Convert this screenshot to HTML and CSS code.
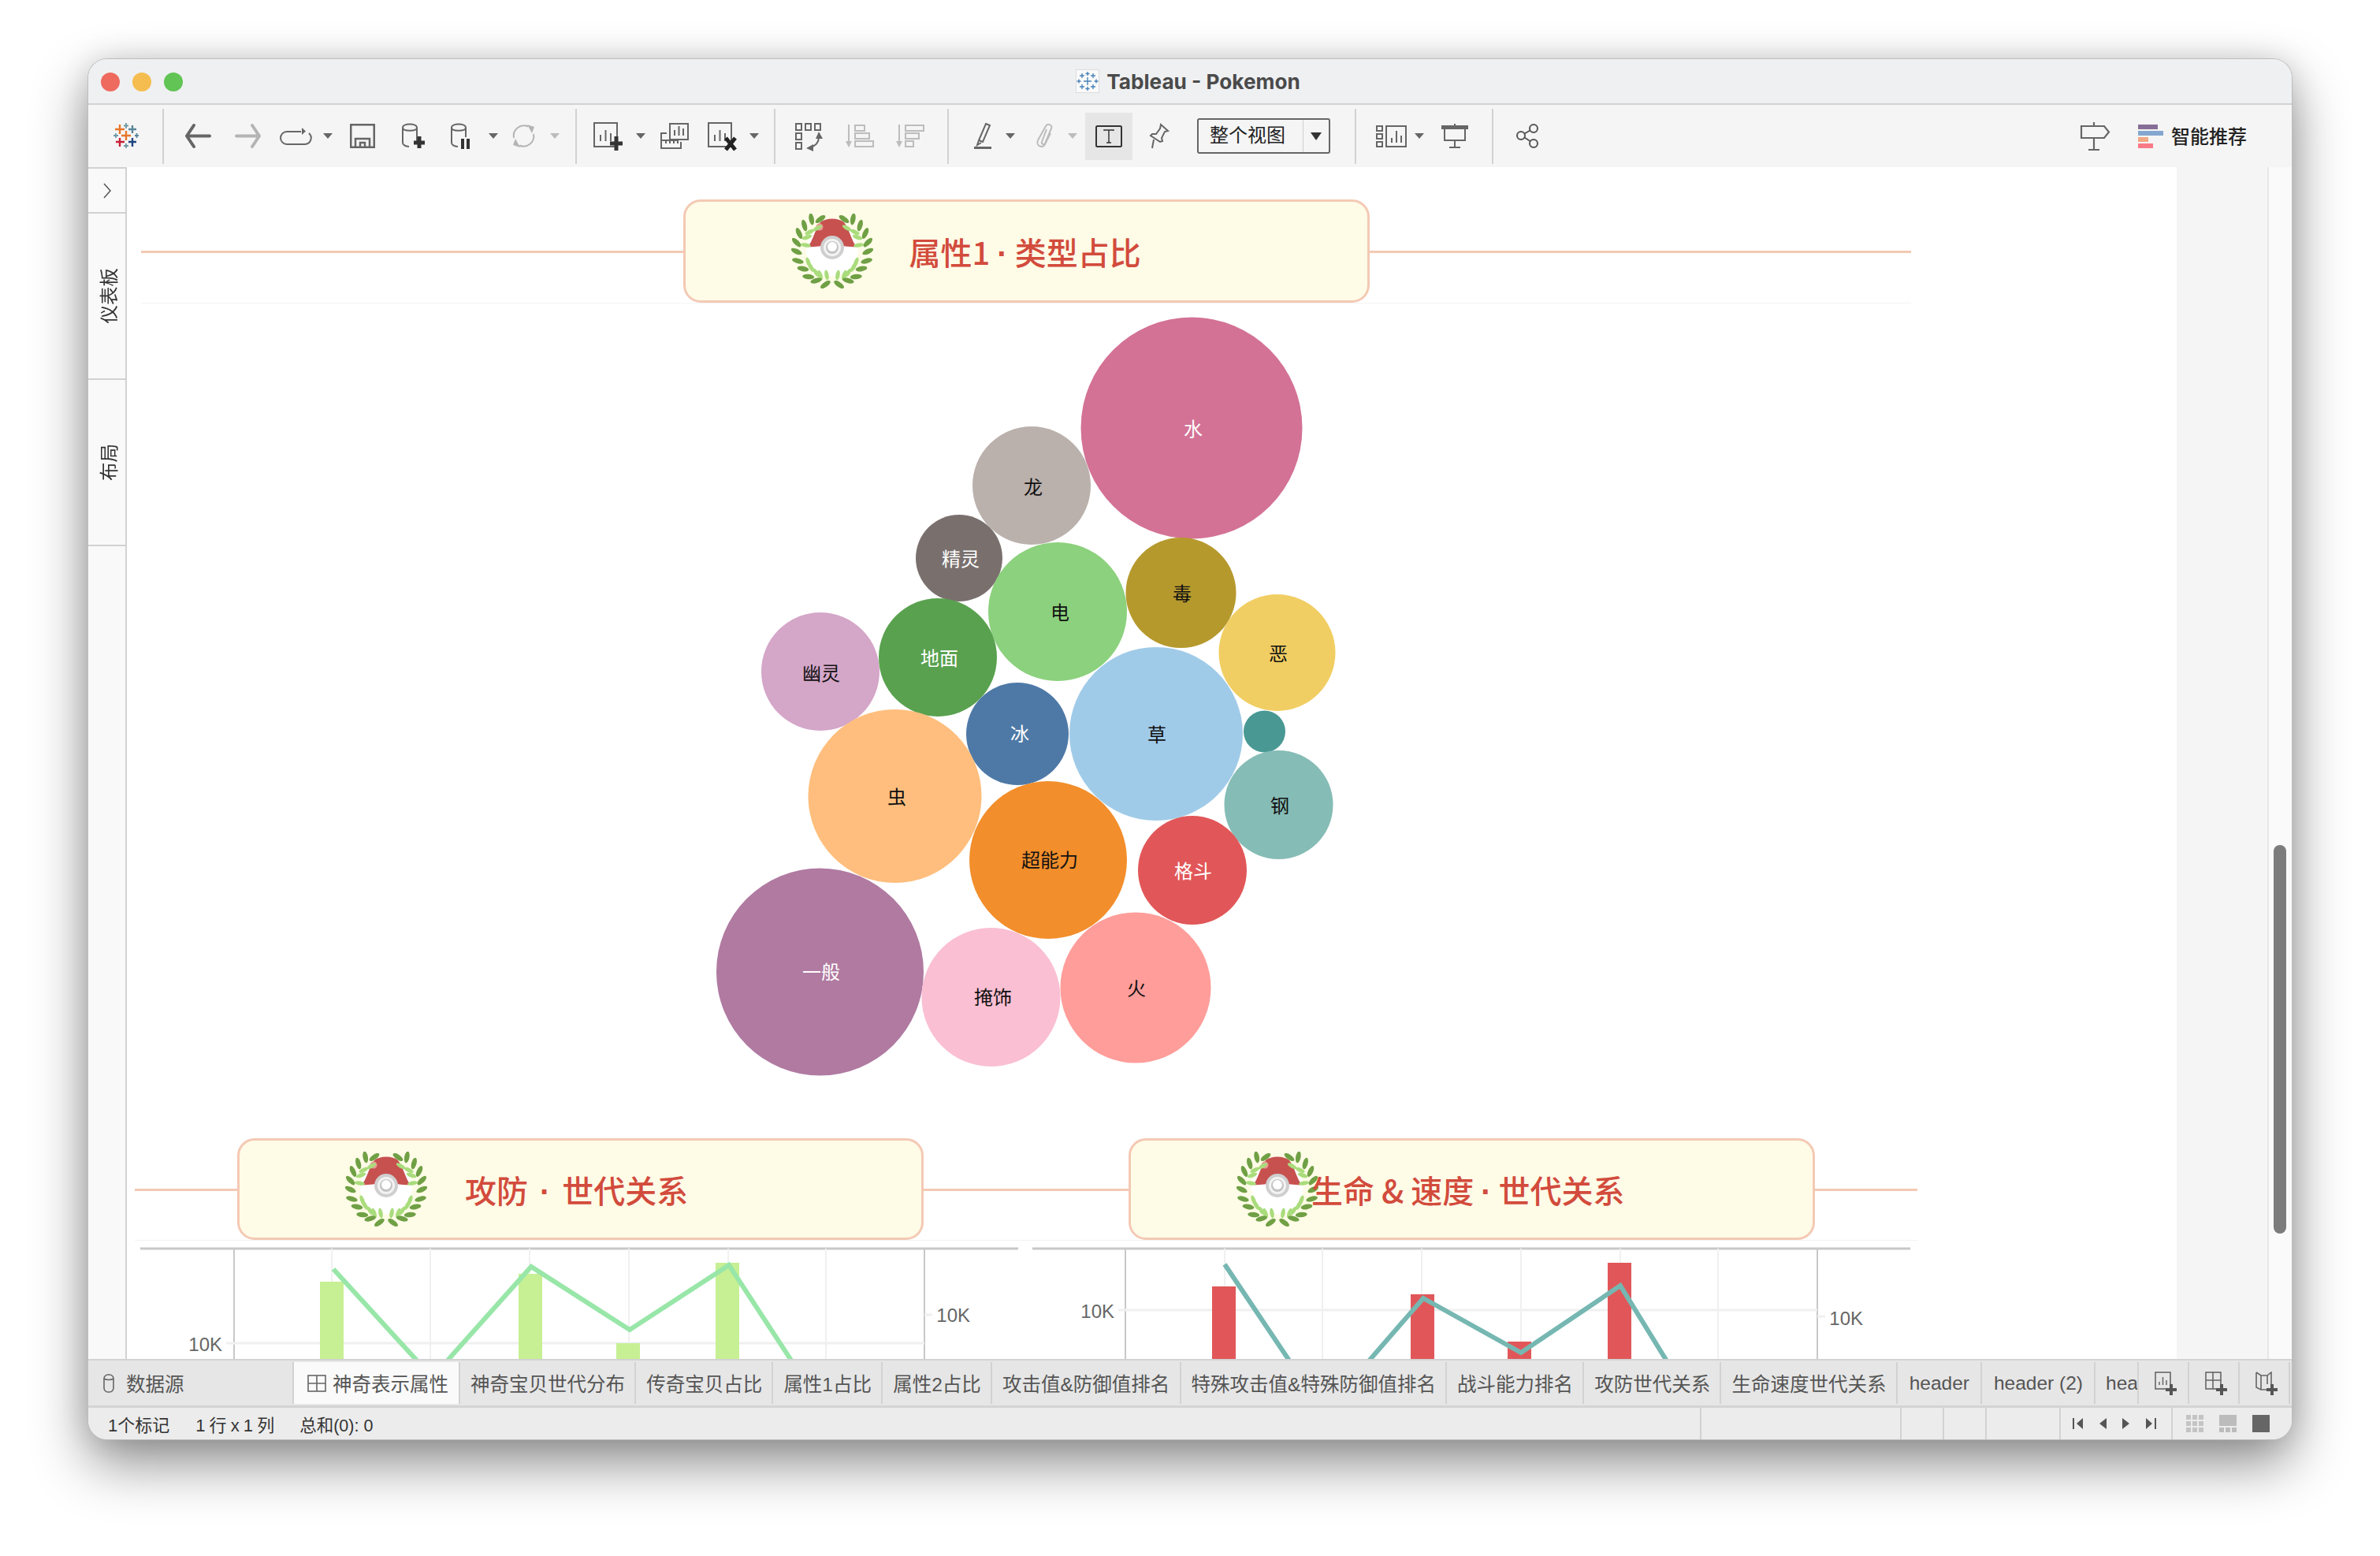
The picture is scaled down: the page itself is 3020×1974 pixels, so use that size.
FILE: index.html
```html
<!DOCTYPE html>
<html lang="zh">
<head>
<meta charset="utf-8">
<title>Tableau - Pokemon</title>
<link rel="stylesheet" href="styles.css">
</head>
<body>
<svg class="defs" width="0" height="0" aria-hidden="true">
  <defs>
    <filter id="soft" x="-5%" y="-5%" width="110%" height="110%"><feGaussianBlur stdDeviation="0.6"/></filter>
    <g id="leafOuter"><ellipse cx="0" cy="0" rx="7.500" ry="3.200" fill="#6fa044"/></g>
    <g id="leafInner"><ellipse cx="0" cy="0" rx="6.500" ry="2.600" fill="#a9dc7c"/></g>
    <symbol id="wreath" viewBox="0 0 104 96">
      <g filter="url(#soft)">
        <circle cx="52" cy="46" r="33" fill="#fff"/>
        <path d="M21 42 C27 36 30 20 37 11 C44 5 60 5 67 11 C74 20 77 36 83 42 C72 43 64 40 52 40 C40 40 32 43 21 42 Z" fill="#c65150"/>
        <circle cx="36" cy="17" r="4.500" fill="#e79a94"/>
        <circle cx="52" cy="43" r="15" fill="#cfcfcf"/>
        <circle cx="52" cy="43" r="11" fill="#f3f3f3"/>
        <circle cx="52" cy="43" r="8" fill="#c4c4c4"/>
        <circle cx="52" cy="42" r="6" fill="#fff"/>
        <g>
          <use href="#leafInner" transform="translate(33.400 18.300) rotate(-30)"/>
          <use href="#leafInner" transform="translate(23.400 23.300) rotate(-25)"/>
          <use href="#leafInner" transform="translate(20 30) rotate(-20)"/>
          <use href="#leafInner" transform="translate(18.400 40) rotate(10)"/>
          <use href="#leafInner" transform="translate(21.700 61.600) rotate(70)"/>
          <use href="#leafInner" transform="translate(25 68) rotate(60)"/>
          <use href="#leafInner" transform="translate(31.700 75) rotate(55)"/>
          <use href="#leafInner" transform="translate(36.700 78) rotate(70)"/>
          <use href="#leafInner" transform="translate(45 78) rotate(80)"/>
          <use href="#leafInner" transform="translate(70.600 18.300) rotate(30)"/>
          <use href="#leafInner" transform="translate(80.600 23.300) rotate(25)"/>
          <use href="#leafInner" transform="translate(84 30) rotate(20)"/>
          <use href="#leafInner" transform="translate(85.600 40) rotate(-10)"/>
          <use href="#leafInner" transform="translate(82.300 61.600) rotate(-70)"/>
          <use href="#leafInner" transform="translate(79 68) rotate(-60)"/>
          <use href="#leafInner" transform="translate(72.300 75) rotate(-55)"/>
          <use href="#leafInner" transform="translate(67.300 78) rotate(-70)"/>
          <use href="#leafInner" transform="translate(59 78) rotate(-80)"/>
        </g>
        <g>
          <use href="#leafOuter" transform="translate(25.700 7) rotate(80)"/>
          <use href="#leafOuter" transform="translate(16.700 15) rotate(75)"/>
          <use href="#leafOuter" transform="translate(10 25) rotate(65)"/>
          <use href="#leafOuter" transform="translate(6.700 36.600) rotate(45)"/>
          <use href="#leafOuter" transform="translate(6.700 48) rotate(25)"/>
          <use href="#leafOuter" transform="translate(8.400 60) rotate(15)"/>
          <use href="#leafOuter" transform="translate(15 70) rotate(10)"/>
          <use href="#leafOuter" transform="translate(21.700 80) rotate(5)"/>
          <use href="#leafOuter" transform="translate(31.700 85) rotate(-15)"/>
          <use href="#leafOuter" transform="translate(43.400 90) rotate(-35)"/>
          <use href="#leafOuter" transform="translate(37 7) rotate(-35)"/>
          <use href="#leafOuter" transform="translate(78.300 7) rotate(-80)"/>
          <use href="#leafOuter" transform="translate(87.300 15) rotate(-75)"/>
          <use href="#leafOuter" transform="translate(94 25) rotate(-65)"/>
          <use href="#leafOuter" transform="translate(97.300 36.600) rotate(-45)"/>
          <use href="#leafOuter" transform="translate(97.300 48) rotate(-25)"/>
          <use href="#leafOuter" transform="translate(95.600 60) rotate(-15)"/>
          <use href="#leafOuter" transform="translate(89 70) rotate(-10)"/>
          <use href="#leafOuter" transform="translate(82.300 80) rotate(-5)"/>
          <use href="#leafOuter" transform="translate(72.300 85) rotate(15)"/>
          <use href="#leafOuter" transform="translate(60.600 90) rotate(35)"/>
          <use href="#leafOuter" transform="translate(67 7) rotate(35)"/>
        </g>
      </g>
    </symbol>
    <g id="sheetBars" fill="none" stroke="#666" stroke-width="2"><path d="M9 24V16M15.500 24V10M22 24V14"/></g>
  </defs>
</svg>

<div class="window">
  <header class="titlebar">
    <div class="lights"><i class="light red"></i><i class="light amber"></i><i class="light green"></i></div>
    <div class="doc">
      <svg class="doc-icon" width="30" height="30" viewBox="0 0 30 30">
        <rect x="0.500" y="0.500" width="29" height="29" fill="#fafafa" stroke="#dcdcdc"/>
        <g stroke="#4a82b8" stroke-width="1.400" fill="none"><path d="M15 3v5M12.500 5.500h5M15 22v5M12.500 24.500h5M4 12.500v5M1.500 15h5M26 12.500v5M23.500 15h5M15 10v10M10 15h10M8 5v6M5 8h6M22 5v6M19 8h6M8 19v6M5 22h6M22 19v6M19 22h6"/></g>
      </svg>
      <span class="doc-name">Tableau - Pokemon</span>
    </div>
  </header>

  <nav class="toolbar">
    <svg class="t-logo" width="31" height="31" viewBox="0 0 31 31" fill="none">
      <g stroke-width="2.400">
        <path d="M9 15h12M15 9v12" stroke="#e8762b"/>
        <path d="M1 7h12M7 1v12" stroke="#e8762b"/>
        <path d="M18 7h10M23 2v10" stroke="#5b879b"/>
        <path d="M2 23h11M7 18v11" stroke="#c72035"/>
        <path d="M18 23h10M23 18v11" stroke="#1f447e"/>
      </g>
      <g stroke-width="1.800">
        <path d="M12 2.500h6M15 -1v7" stroke="#7099a6"/>
        <path d="M12 28h6M15 25v6" stroke="#7099a6"/>
        <path d="M-1 15h6M2 12v6" stroke="#7099a6"/>
        <path d="M26 15h5M28.500 12v6" stroke="#59879b"/>
      </g>
    </svg>
    <i class="t-sep s1"></i>
    <svg class="t-back" width="34" height="31" viewBox="0 0 34 31" fill="none" stroke="#666" stroke-width="4" stroke-linecap="round" stroke-linejoin="round"><path d="M32 15.500H3M12 2 3 15.500 12 29"/></svg>
    <svg class="t-fwd" width="34" height="31" viewBox="0 0 34 31" fill="none" stroke="#b4b4b4" stroke-width="4" stroke-linecap="round" stroke-linejoin="round"><path d="M2 15.500h29M22 2l9 13.500L22 29"/></svg>
    <svg class="t-redo" width="41" height="24" viewBox="0 0 41 24" fill="none" stroke="#666" stroke-width="2"><path d="M27 6H9a8 8 0 0 0 0 16h23a8 8 0 0 0 5-14"/><path d="m28 2 5 4.500-5 4.500" fill="#666" stroke="none" transform="translate(0 -1)"/></svg>
    <i class="caret c-redo"></i>
    <svg class="t-save" width="32" height="31" viewBox="0 0 32 31" fill="none" stroke="#666" stroke-width="2.500"><rect x="1.250" y="1.250" width="29.500" height="28.500"/><path d="M7 30V19h18v11M13 30v-6h6v6"/></svg>
    <svg class="t-ds" width="29" height="33" viewBox="0 0 29 33" fill="none"><path d="M1 6v19c0 2.500 3 5 8 5M19 6v18M1 6c0-6 18-6 18 0 0 5-18 5-18 0Z" stroke="#666" stroke-width="2"/><path d="M22 17v15M15 25h14" stroke="#333" stroke-width="5"/></svg>
    <svg class="t-pause" width="25" height="33" viewBox="0 0 25 33" fill="none"><path d="M1 6v19c0 2.500 3 5 8 5M19 6v12M1 6c0-6 18-6 18 0 0 5-18 5-18 0Z" stroke="#666" stroke-width="2"/><path d="M15 20v13M22 20v13" stroke="#333" stroke-width="4"/></svg>
    <i class="caret c-pause"></i>
    <svg class="t-refresh" width="33" height="31" viewBox="0 0 33 31" fill="none" stroke="#b4b4b4" stroke-width="2"><path d="M4 18A13 13 0 0 1 22 3.500M29 13a13 13 0 0 1-18 14.500"/><path d="m21 1 9 3-3 8ZM12 30l-9-3 3-8Z" fill="#b4b4b4" stroke="none"/></svg>
    <i class="caret light-caret c-refresh"></i>
    <i class="t-sep s2"></i>
    <svg class="t-new" width="37" height="36" viewBox="0 0 37 36" fill="none"><rect x="1" y="1" width="29" height="30" stroke="#666" stroke-width="2"/><use href="#sheetBars"/><path d="M29 18v18M21 27h16" stroke="#333" stroke-width="5"/></svg>
    <i class="caret c-new"></i>
    <svg class="t-dup" width="36" height="33" viewBox="0 0 36 33" fill="none" stroke="#666" stroke-width="2"><rect x="12" y="1" width="23" height="20"/><path d="M18 16V9M23.500 16V4M29 16V7"/><path d="M8 13H1v19h25v-8M7 26v-3M12 26v-3M17 26v-3M22 26v-3"/><path d="M1 22h22" stroke-width="2"/></svg>
    <svg class="t-clear" width="37" height="36" viewBox="0 0 37 36" fill="none"><rect x="1" y="1" width="29" height="30" stroke="#666" stroke-width="2"/><use href="#sheetBars"/><path d="m23 20 12 15M35 20 23 35" stroke="#222" stroke-width="5"/></svg>
    <i class="caret c-clear"></i>
    <i class="t-sep s3"></i>
    <svg class="t-swap" width="35" height="34" viewBox="0 0 35 34" fill="none" stroke="#666" stroke-width="2"><rect x="1" y="1" width="7" height="8"/><rect x="13" y="1" width="7" height="8"/><rect x="25" y="1" width="7" height="8"/><rect x="1" y="13" width="7" height="8"/><rect x="1" y="25" width="7" height="8"/><path d="M30 18c0 6-4 11-11 13"/><path d="m30 11 5 9h-9ZM14 32l9-5v9Z" fill="#666" stroke="none"/></svg>
    <svg class="t-asc" width="36" height="29" viewBox="0 0 36 29" fill="none" stroke="#bcbcbc" stroke-width="2"><path d="M4 0v24"/><path d="m0 21 4 8 4-8Z" fill="#bcbcbc" stroke="none"/><rect x="12" y="1" width="12" height="7"/><rect x="12" y="11" width="18" height="7"/><rect x="12" y="21" width="23" height="7"/></svg>
    <svg class="t-desc" width="36" height="29" viewBox="0 0 36 29" fill="none" stroke="#bcbcbc" stroke-width="2"><path d="M4 0v24"/><path d="m0 21 4 8 4-8Z" fill="#bcbcbc" stroke="none"/><rect x="12" y="1" width="23" height="7"/><rect x="12" y="11" width="17" height="7"/><rect x="12" y="21" width="10" height="7"/></svg>
    <i class="t-sep s4"></i>
    <svg class="t-pen" width="22" height="33" viewBox="0 0 22 33" fill="none" stroke="#666" stroke-width="2"><path d="m15 1 5 2-9 21-5-2ZM6 22l-2 6 5-3"/><path d="M0 31.500h22" stroke-width="3"/></svg>
    <i class="caret c-pen"></i>
    <svg class="t-clip" width="25" height="31" viewBox="0 0 25 31" fill="none" stroke="#bcbcbc" stroke-width="2"><path d="M15 7 9 23c-1 3 3 4 4 2l8-19c2-5-5-7-7-3L4 21c-3 7 6 11 9 5l7-14"/></svg>
    <i class="caret light-caret c-clip"></i>
    <span class="t-text"><svg width="34" height="28" viewBox="0 0 34 28" fill="none"><rect x="1" y="1" width="32" height="26" rx="1.500" stroke="#333" stroke-width="2"/><path d="M11 7V6h12v1M17 6v16M14 22h6" stroke="#333" stroke-width="1.500"/></svg></span>
    <svg class="t-pin" width="26" height="31" viewBox="0 0 26 31" fill="none" stroke="#666" stroke-width="2"><path d="M16 1 25 9l-4 1-4 8 1 4-3 1L3 15l2-2 5 0 5-7Z"/><path d="M7 20 5 31"/></svg>
    <span class="t-select"><span class="t-select-label">整个视图</span><span class="t-select-arrow"><i class="caret dark-caret"></i></span></span>
    <i class="t-sep s5"></i>
    <svg class="t-show" width="40" height="28" viewBox="0 0 40 28" fill="none" stroke="#666" stroke-width="2"><rect x="1" y="1" width="7" height="6"/><rect x="1" y="11" width="7" height="6"/><rect x="1" y="21" width="7" height="6"/><rect x="13" y="1" width="25" height="26"/><path d="M20 22v-6M26 22V7M32 22v-9"/></svg>
    <i class="caret c-show"></i>
    <svg class="t-pres" width="34" height="31" viewBox="0 0 34 31" fill="none" stroke="#666" stroke-width="2"><path d="M0 4.500h34" stroke-width="5"/><path d="M17 0v4M4 6v15h26V6M17 21v9M10 30h14"/></svg>
    <i class="t-sep s6"></i>
    <svg class="t-share" width="29" height="31" viewBox="0 0 29 31" fill="none" stroke="#555" stroke-width="2"><circle cx="22" cy="6" r="5"/><circle cx="6" cy="15" r="5"/><circle cx="22" cy="25" r="5"/><path d="m10.500 12.500 7-4M10.500 17.500l7 4.500"/></svg>
    <span class="t-spacer"></span>
    <svg class="t-sign" width="37" height="36" viewBox="0 0 37 36" fill="none" stroke="#666" stroke-width="2.200"><path d="M17 0v5M1 5h29l6 7.500-6 7.500H1ZM17 20v15M10 35h14"/></svg>
    <span class="t-bars"><i class="bar b1"></i><i class="bar b2"></i><i class="bar b3"></i><i class="bar b4"></i></span>
    <span class="t-smart">智能推荐</span>
  </nav>

  <main class="main">
    <aside class="sidebar">
      <div class="side-top"><svg width="10" height="20" viewBox="0 0 10 20" fill="none" stroke="#555" stroke-width="1.500"><path d="m1 1 8 9-8 9"/></svg></div>
      <div class="side-tab"><span class="side-label">仪表板</span></div>
      <div class="side-tab"><span class="side-label">布局</span></div>
    </aside>

    <section class="canvas">
      <div class="head head-top">
        <div class="banner">
          <svg class="wreath w-a"><use href="#wreath"/></svg>
          <span class="banner-title bt-a">属性1 <span class="dot">·</span> 类型占比</span>
        </div>
      </div>

      <svg class="bubbles" viewBox="179 385 2246 1059">
        <circle cx="1512" cy="543" r="140.500" fill="#d37295"/>
        <circle cx="1309" cy="616" r="75" fill="#bab0ac"/>
        <circle cx="1217" cy="708" r="55" fill="#79706e"/>
        <circle cx="1342" cy="776" r="88" fill="#8cd17d"/>
        <circle cx="1498.500" cy="752" r="70" fill="#b6992d"/>
        <circle cx="1620.500" cy="828" r="74" fill="#f1ce63"/>
        <circle cx="1041" cy="852" r="75" fill="#d4a6c8"/>
        <circle cx="1190" cy="834" r="75" fill="#59a14f"/>
        <circle cx="1291" cy="931" r="65" fill="#4e79a7"/>
        <circle cx="1467" cy="931" r="110" fill="#a0cbe8"/>
        <circle cx="1604.500" cy="928" r="26.500" fill="#499894"/>
        <circle cx="1622.500" cy="1021" r="69" fill="#86bcb6"/>
        <circle cx="1135.500" cy="1010" r="110" fill="#ffbe7d"/>
        <circle cx="1330" cy="1091" r="100" fill="#f28e2b"/>
        <circle cx="1513" cy="1104" r="69" fill="#e15759"/>
        <circle cx="1040.500" cy="1233" r="131.500" fill="#b07aa1"/>
        <circle cx="1257.500" cy="1265" r="88" fill="#fabfd2"/>
        <circle cx="1441" cy="1253" r="95.500" fill="#ff9d9a"/>
        <g class="lbl">
          <text class="lw" x="1514" y="544">水</text>
          <text x="1311" y="618">龙</text>
          <text class="lw" x="1219" y="709">精灵</text>
          <text x="1345" y="777">电</text>
          <text x="1500" y="753">毒</text>
          <text x="1622" y="829">恶</text>
          <text x="1042" y="854">幽灵</text>
          <text class="lw" x="1192" y="835">地面</text>
          <text class="lw" x="1294" y="931">冰</text>
          <text x="1468" y="932">草</text>
          <text x="1624" y="1022">钢</text>
          <text x="1138" y="1011">虫</text>
          <text x="1332" y="1091">超能力</text>
          <text class="lw" x="1514" y="1105">格斗</text>
          <text class="lw" x="1042" y="1233">一般</text>
          <text x="1260" y="1265">掩饰</text>
          <text x="1442" y="1254">火</text>
        </g>
      </svg>

      <div class="row">
        <div class="pane">
          <div class="head head-low">
            <div class="banner">
              <svg class="wreath w-b"><use href="#wreath"/></svg>
              <span class="banner-title bt-b">攻防 <span class="dot">·</span> 世代关系</span>
            </div>
          </div>
          <svg class="chart" viewBox="171 1574 1131 150">
            <path class="axis-top" d="M178 1584H1292"/>
            <path class="frame" d="M297 1584V1724M1173 1584V1724"/>
            <path class="grid-v" d="M421 1584V1724M546 1584V1724M672 1584V1724M798 1584V1724M924 1584V1724M1048 1584V1724"/>
            <path class="grid-h" d="M287 1704H1173M1173 1668H1183"/>
            <g fill="#c6f093">
              <rect x="406" y="1626" width="30" height="100"/>
              <rect x="658" y="1616" width="30" height="110"/>
              <rect x="782" y="1704" width="30" height="22"/>
              <rect x="908" y="1602" width="30" height="124"/>
            </g>
            <path class="trend t-green" d="M423 1610 540 1738 M557 1738 674 1607 799 1687 925 1605 1012 1738"/>
            <text class="tick" x="282" y="1714">10K</text>
            <text class="tick" x="1231" y="1677">10K</text>
          </svg>
        </div>
        <div class="pane">
          <div class="head head-low">
            <div class="banner">
              <svg class="wreath w-c"><use href="#wreath"/></svg>
              <span class="banner-title bt-c">生命 &amp; 速度 <span class="dot">·</span> 世代关系</span>
            </div>
          </div>
          <svg class="chart" viewBox="1302 1574 1131 150">
            <path class="axis-top" d="M1310 1584H2424"/>
            <path class="frame" d="M1428 1584V1724M2306 1584V1724"/>
            <path class="grid-v" d="M1554 1584V1724M1678 1584V1724M1804 1584V1724M1930 1584V1724M2056 1584V1724M2180 1584V1724"/>
            <path class="grid-h" d="M1419 1662H2306M2306 1670H2316"/>
            <g fill="#e15759">
              <rect x="1538" y="1632" width="30" height="94"/>
              <rect x="1790" y="1642" width="30" height="84"/>
              <rect x="1913" y="1702" width="30" height="24"/>
              <rect x="2040" y="1602" width="30" height="124"/>
            </g>
            <path class="trend t-teal" d="M1554 1604 1644 1738 M1727 1738 1806 1647 1930 1716 2056 1631 2122 1738"/>
            <text class="tick" x="1414" y="1672">10K</text>
            <text class="tick" x="2364" y="1681">10K</text>
          </svg>
        </div>
      </div>
    </section>

    <div class="side-gutter"></div>
    <div class="scroll"><div class="thumb"></div></div>
  </main>

  <div class="tabs">
    <div class="tab tab-source">
      <svg width="14" height="24" viewBox="0 0 14 24" fill="none" stroke="#666" stroke-width="1.600"><rect x="1" y="1" width="12" height="22" rx="5"/><path d="M1 6c3 2 9 2 12 0"/></svg>
      <span>数据源</span>
    </div>
    <div class="tab active">
      <svg width="24" height="24" viewBox="0 0 24 24" fill="none" stroke="#666" stroke-width="1.600"><rect x="1" y="2" width="22" height="20"/><path d="M1 12h22M12 2v20"/></svg>
      <span>神奇表示属性</span>
    </div>
    <div class="tab">神奇宝贝世代分布</div>
    <div class="tab">传奇宝贝占比</div>
    <div class="tab">属性1占比</div>
    <div class="tab">属性2占比</div>
    <div class="tab">攻击值&amp;防御值排名</div>
    <div class="tab">特殊攻击值&amp;特殊防御值排名</div>
    <div class="tab">战斗能力排名</div>
    <div class="tab">攻防世代关系</div>
    <div class="tab">生命速度世代关系</div>
    <div class="tab tab-latin">header</div>
    <div class="tab tab-latin">header (2)</div>
    <div class="tab tab-cut"><span>header (3)</span></div>
    <div class="tab tab-add">
      <svg width="28" height="30" viewBox="0 0 28 30" fill="none"><rect x="1" y="1" width="19" height="21" stroke="#666" stroke-width="1.600"/><path d="M6 17v-4M10.500 17V7M15 17v-6" stroke="#666" stroke-width="1.500"/><path d="M21 16v14M14 23h14" stroke="#555" stroke-width="4"/></svg>
    </div>
    <div class="tab tab-add">
      <svg width="28" height="30" viewBox="0 0 28 30" fill="none"><rect x="1" y="1" width="19" height="21" stroke="#666" stroke-width="1.600"/><path d="M1 11h19M10 1v21" stroke="#666" stroke-width="1.600"/><path d="M21 16v14M14 23h14" stroke="#555" stroke-width="4"/></svg>
    </div>
    <div class="tab tab-add">
      <svg width="28" height="30" viewBox="0 0 28 30" fill="none"><path d="M1 1l6 4h8l5-4v16M1 1v19l6 3h7M7 5v18M15 5v11" stroke="#666" stroke-width="1.600"/><path d="M21 16v14M14 23h14" stroke="#555" stroke-width="4"/></svg>
    </div>
  </div>

  <footer class="status">
    <span class="st st-1">1个标记</span>
    <span class="st st-2">1 行 x 1 列</span>
    <span class="st st-3">总和(0): 0</span>
    <span class="st-spacer"></span>
    <i class="cell c1"></i><i class="cell c2"></i><i class="cell c3"></i><i class="cell c4"></i>
    <span class="pager">
      <svg width="13" height="14" viewBox="0 0 13 14" fill="#555"><path d="M0 0h2v14H0ZM13 0v14L5 7Z"/></svg>
      <svg width="10" height="14" viewBox="0 0 10 14" fill="#555"><path d="M10 0v14L1 7Z"/></svg>
      <svg width="10" height="14" viewBox="0 0 10 14" fill="#555"><path d="M0 0v14l9-7Z"/></svg>
      <svg width="13" height="14" viewBox="0 0 13 14" fill="#555"><path d="M0 0v14l8-7ZM11 0h2v14h-2Z"/></svg>
    </span>
    <span class="views">
      <svg width="22" height="22" viewBox="0 0 22 22" fill="#c4c4c4"><path d="M0 0h6v6H0ZM8 0h6v6H8ZM16 0h6v6h-6ZM0 8h6v6H0ZM8 8h6v6H8ZM16 8h6v6h-6ZM0 16h6v6H0ZM8 16h6v6H8ZM16 16h6v6h-6Z"/></svg>
      <svg width="22" height="22" viewBox="0 0 22 22" fill="#bcbcbc"><path d="M0 0h22v14H0ZM0 16h6v6H0ZM8 16h6v6H8ZM16 16h6v6h-6Z"/></svg>
      <svg width="22" height="22" viewBox="0 0 22 22" fill="#666"><path d="M0 0h22v22H0Z"/></svg>
    </span>
  </footer>
</div>
</body>
</html>
```

FILE: styles.css
```css
* { box-sizing: border-box; }

html, body { margin: 0; padding: 0; background: #fff; }

body {
  width: 3020px;
  height: 1974px;
  overflow: hidden;
  padding: 75px 112px 0;
  font-family: "Liberation Sans", "Noto Sans CJK SC", sans-serif;
}

.defs { display: block; height: 0; }

.window {
  width: 2796px;
  height: 1751px;
  display: flex;
  flex-direction: column;
  border-radius: 24px;
  overflow: hidden;
  box-shadow: 0 0 0 1px #bdbdbd, 0 30px 70px rgba(0, 0, 0, .45), 0 0 36px rgba(0, 0, 0, .12);
  background: #f5f5f5;
}

.titlebar {
  height: 58px;
  flex: none;
  position: relative;
  display: flex;
  align-items: center;
  justify-content: center;
  background: #eff0f2;
  border-bottom: 2px solid #d2d2d2;
}

.lights { position: absolute; left: 16px; top: 17px; display: flex; gap: 16px; }
.light { width: 24px; height: 24px; border-radius: 50%; display: block; }
.red { background: #ee6a5f; }
.amber { background: #f5bd4f; }
.green { background: #61c454; }

.doc { display: flex; align-items: center; gap: 9px; margin-left: -5px; }
.doc-icon { display: block; }
.doc-name { font-family: Inter, "Liberation Sans", sans-serif; font-size: 26.200px; font-weight: 700; color: #4a4a4a; }

/* toolbar */
.toolbar {
  height: 79px;
  flex: none;
  display: flex;
  align-items: center;
  padding-left: 33px;
  background: #f5f5f5;
}
.toolbar svg { flex: none; display: block; overflow: visible; }
.t-sep { flex: none; width: 2px; height: 70px; background: #d2d2d2; }
.t-spacer { flex: 1; }
.caret { flex: none; display: block; width: 0; height: 0; border-left: 6px solid transparent; border-right: 6px solid transparent; border-top: 7px solid #666; }
.light-caret { border-top-color: #bcbcbc; }
.dark-caret { border-left-width: 7px; border-right-width: 7px; border-top-width: 10px; border-top-color: #333; }

.s1 { margin-left: 30px; }
.t-back { margin-left: 26px; }
.t-fwd { margin-left: 30px; }
.t-redo { margin-left: 23px; }
.c-redo { margin-left: 14px; }
.t-save { margin-left: 22px; }
.t-ds { margin-left: 34px; }
.t-pause { margin-left: 33px; }
.c-pause { margin-left: 23px; }
.t-refresh { margin-left: 16px; }
.c-refresh { margin-left: 17px; }
.s2 { margin-left: 20px; }
.t-new { margin-left: 21px; }
.c-new { margin-left: 17px; }
.t-dup { margin-left: 19px; }
.t-clear { margin-left: 24px; }
.c-clear { margin-left: 16px; }
.s3 { margin-left: 19px; }
.t-swap { margin-left: 25px; }
.t-asc { margin-left: 29px; }
.t-desc { margin-left: 28px; }
.s4 { margin-left: 29px; }
.t-pen { margin-left: 32px; }
.c-pen { margin-left: 18px; }
.t-clip { margin-left: 25px; }
.c-clip { margin-left: 17px; }
.t-text { margin-left: 10px; width: 60px; height: 60px; flex: none; display: flex; align-items: center; justify-content: center; background: #e6e6e6; }
.t-pin { margin-left: 20px; }
.t-select { margin-left: 36px; width: 169px; height: 45px; flex: none; display: flex; border: 2.500px solid #666; border-radius: 3px; }
.t-select-label { width: 132px; padding-left: 14px; font-size: 24px; line-height: 39px; color: #222; }
.t-select-arrow { flex: 1; border-left: 1px solid #d0d0d0; display: flex; align-items: center; justify-content: center; }
.s5 { margin-left: 31px; }
.t-show { margin-left: 25px; }
.c-show { margin-left: 9px; }
.t-pres { margin-left: 22px; }
.s6 { margin-left: 30px; }
.t-share { margin-left: 29px; }
.t-bars { margin-left: 36px; width: 32px; display: flex; flex-direction: column; gap: 2px; flex: none; }
.bar { display: block; height: 6px; }
.b1 { width: 25px; background: #866f96; }
.b2 { width: 32px; background: #84a7cf; }
.b3 { width: 13px; background: #f2a883; }
.b4 { width: 19px; background: #f97a87; }
.t-smart { margin-left: 10px; margin-right: 57px; margin-top: -2px; font-size: 24px; color: #222; font-weight: 500; }

/* main */
.main { flex: none; height: 1512px; display: flex; background: #fff; }

.sidebar {
  flex: none;
  width: 49px;
  background: #f9f9f9;
  border-right: 2px solid #d2d2d2;
  border-top: 2px solid #d2d2d2;
  display: flex;
  flex-direction: column;
}
.side-top { height: 57px; display: flex; align-items: center; justify-content: center; border-bottom: 2px solid #d2d2d2; flex: none; }
.side-tab { height: 211px; flex: none; display: flex; align-items: center; justify-content: center; border-bottom: 2px solid #d2d2d2; }
.side-label { writing-mode: vertical-rl; text-orientation: sideways; transform: rotate(180deg); font-size: 23.500px; color: #333; margin-left: 2px; }

.canvas { width: 2601px; flex: none; height: 1512px; overflow: hidden; background: #fff; display: flex; flex-direction: column; }

.head { position: relative; display: flex; justify-content: center; flex: none; border-bottom: 1px solid #f3f3f3; }
.head::before { content: ""; position: absolute; left: 0; right: 0; top: 50%; height: 3px; margin-top: -1px; background: #f4c9b4; }
.head-top { margin: 41px 0 0 18px; width: 2246px; height: 132px; }
.head-low { height: 130px; }

.banner {
  position: relative;
  width: 871px;
  height: 100%;
  display: flex;
  align-items: center;
  background: #fefbe7;
  border: 3px solid #f4c9b4;
  border-radius: 22px;
}
.wreath { display: block; flex: none; width: 104px; height: 96px; }
.banner-title { font-family: "Noto Sans CJK SC", sans-serif; font-size: 40px; color: #d24b3c; font-weight: 500; white-space: nowrap; }
.dot { font-family: "Liberation Sans", sans-serif; font-weight: 700; }
.w-a { margin-left: 134px; }
.bt-a { margin-left: 46px; }
.w-b { margin-left: 134px; }
.bt-b { margin-left: 48px; word-spacing: 6px; }
.w-c { margin-left: 134px; }
.bt-c { margin-left: -9px; }

.bubbles { display: block; flex: none; width: 2246px; height: 1059px; margin-left: 18px; }
.lbl text { font-size: 24px; text-anchor: middle; dominant-baseline: central; fill: #111; }
.lbl .lw { fill: #fff; }

.row { display: flex; flex: none; margin-left: 10px; }
.pane { width: 1131px; flex: none; }
.chart { display: block; width: 1131px; height: 150px; }
.axis-top { stroke: #c8c8c8; stroke-width: 3; fill: none; }
.frame { stroke: #c8c8c8; stroke-width: 2; fill: none; }
.grid-v { stroke: #f0f0f0; stroke-width: 2; fill: none; }
.grid-h { stroke: #f0f0f0; stroke-width: 3; fill: none; }
.trend { fill: none; stroke-width: 6; }
.t-green { stroke: #98e6a8; }
.t-teal { stroke: #76b7b2; }
.tick { font-size: 24px; fill: #666; text-anchor: end; }

.side-gutter { width: 117px; flex: none; background: #f5f5f5; border-right: 2px solid #e6e6e6; }
.scroll { flex: 1; background: #fafafa; padding: 860px 5px 0 6px; }
.thumb { width: 16px; height: 493px; background: #7c7c7c; border-radius: 8px; }

/* tabs */
.tabs {
  height: 62px;
  flex: none;
  display: flex;
  background: #e6e6e6;
  border-top: 2px solid #d2d2d2;
  border-bottom: 3px solid #d4d4d4;
  padding-top: 2px;
  color: #555;
  font-size: 24.500px;
}
.tab {
  flex: none;
  display: flex;
  align-items: center;
  gap: 8px;
  padding: 0 12.200px 0 13px;
  border-right: 2px solid #d2d2d2;
  white-space: nowrap;
  margin-bottom: 2px;
}
.tab-source { width: 261px; padding-left: 19px; gap: 15px; }
.active { width: 211px; background: #fafafa; padding-left: 17px; color: #555; }
.tab-latin { padding: 0 14px 0 15px; }
.tab-cut { width: 55px; padding: 0 0 0 13px; overflow: hidden; }
.tab-add { width: 64px; padding: 0 0 0 20px; }

/* status */
.status {
  flex: none;
  height: 40px;
  display: flex;
  align-items: center;
  background: #ececec;
  font-size: 22px;
  color: #333;
}
.st { white-space: nowrap; font-size: 22px; }
.st-1 { margin-left: 25px; }
.st-2 { margin-left: 33px; word-spacing: -1px; }
.st-3 { margin-left: 32px; font-size: 21.500px; }
.st-spacer { flex: 1; }
.cell { display: block; height: 100%; width: 2px; flex: none; background: #d2d2d2; }
.c1 { margin-right: 252px; }
.c2 { margin-right: 52px; }
.c3 { margin-right: 52px; }
.c4 { margin-right: 92px; }
.pager { width: 144px; flex: none; height: 100%; display: flex; align-items: center; gap: 20px; padding-left: 15px; border-left: 2px solid #d2d2d2; border-right: 2px solid #d2d2d2; }
.views { width: 151px; flex: none; display: flex; align-items: center; gap: 20px; padding-left: 17px; }
```
